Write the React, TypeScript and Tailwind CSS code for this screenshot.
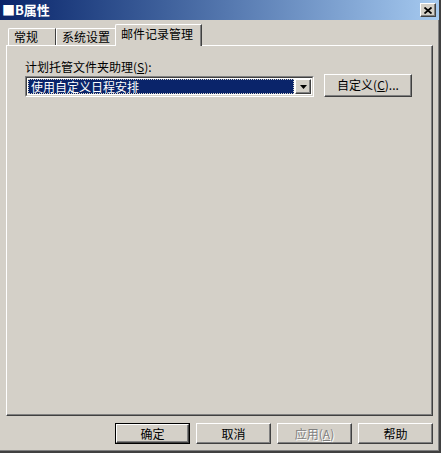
import React from "react";

const font = { fontFamily: '"Noto Sans CJK SC", "Noto Sans", sans-serif' };

function Btn({ children, def, disabled, w = "w-[75px]", h = "h-[21px]" }: { children: React.ReactNode; def?: boolean; disabled?: boolean; w?: string; h?: string }) {
  const inner = (
    <div className="flex-1 flex items-center justify-center bg-[#d4d0c8] border-t border-l border-t-white border-l-white border-r border-b border-r-[#404040] border-b-[#404040] shadow-[inset_-1px_-1px_0_#808080]">
      <span className={disabled ? "text-[#808080] [text-shadow:1px_1px_0_#ffffff]" : "text-black"}>{children}</span>
    </div>
  );
  return (
    <div className={`${w} ${h} flex text-[12px] leading-[14px] ${def ? "border border-black" : ""}`}>{inner}</div>
  );
}

export default function App() {
  return (
    <div style={font} className="w-[441px] h-[453px] bg-[#d4d0c8] flex flex-col border-r-2 border-b-2 border-r-[#404040] border-b-[#404040] shadow-[inset_-1px_-1px_0_#808080] text-[12px] text-black overflow-hidden">
      {/* Title bar */}
      <div className="h-[20px] shrink-0 flex items-center justify-between pl-[2px] pr-[3px] bg-gradient-to-r from-[#0a246a] to-[#a6caf0]">
        <span className="text-white font-bold text-[13px] leading-[16px]">■B属性</span>
        <div className="w-[16px] h-[14px] flex items-center justify-center bg-[#d4d0c8] border-t border-l border-t-white border-l-white border-r border-b border-r-[#404040] border-b-[#404040] shadow-[inset_-1px_-1px_0_#808080]">
          <svg width="8" height="7" viewBox="0 0 8 7">
            <path d="M0.5 0.5 L7.5 6.5 M7.5 0.5 L0.5 6.5" stroke="#000" strokeWidth="1.8" />
          </svg>
        </div>
      </div>

      {/* Tabs */}
      <div className="px-[6px] pt-[4px] flex flex-col">
        <div className="h-[21px] flex items-end pl-[2px]">
          <div className="w-[48px] h-[17px] flex items-start pt-[1px] pl-[5px] border-t border-l border-t-white border-l-white border-r border-r-[#404040] rounded-tl-[2px] leading-[14px]">
            常规
          </div>
          <div className="w-[59px] h-[17px] flex items-start pt-[1px] pl-[5px] border-t border-t-white border-l border-l-white leading-[14px]">
            系统设置
          </div>
          <div className="relative z-10 -mb-px w-[87px] h-[22px] flex items-start pt-[2px] pl-[5px] bg-[#d4d0c8] border-t border-l border-t-white border-l-white border-r border-r-[#404040] shadow-[inset_-1px_0_0_#808080] rounded-tl-[2px] leading-[14px]">
            邮件记录管理
          </div>
        </div>

        {/* Panel */}
        <div className="h-[371px] border-t border-l border-t-white border-l-white border-r border-b border-r-[#404040] border-b-[#404040] shadow-[inset_-1px_-1px_0_#808080] pl-[18px] pt-[13px] flex flex-col">
          <div className="leading-[16px] h-[16px]">
            计划托管文件夹助理(<span className="underline">S</span>):
          </div>
          <div className="mt-[1px] flex items-center gap-[10px]">
            {/* Combo */}
            <div className="w-[289px] h-[21px] flex border-t border-l border-t-[#808080] border-l-[#808080] border-r border-b border-r-white border-b-white">
              <div className="flex-1 flex bg-white border-t border-l border-t-[#404040] border-l-[#404040] border-r border-b border-r-[#d4d0c8] border-b-[#d4d0c8] p-[1px]">
                <div className="flex-1 flex items-center bg-[#0a246a] outline-1 outline-dotted outline-[#d4d0c8] -outline-offset-1 pl-[3px] text-white leading-[14px]">
                  使用自定义日程安排
                </div>
                <div className="w-[16px] flex items-center justify-center bg-[#d4d0c8] ml-[1px] border-t border-l border-t-white border-l-white border-r border-b border-r-[#404040] border-b-[#404040] shadow-[inset_-1px_-1px_0_#808080]">
                  <svg width="7" height="4" viewBox="0 0 7 4">
                    <path d="M0 0 H7 L3.5 4 Z" fill="#000" />
                  </svg>
                </div>
              </div>
            </div>
            <div className="-mt-[3px]">
              <Btn w="w-[88px]" h="h-[23px]">
                自定义(<span className="underline">C</span>)...
              </Btn>
            </div>
          </div>
        </div>

        {/* Buttons */}
        <div className="mt-[7px] flex justify-end gap-[6px]">
          <Btn def>确定</Btn>
          <Btn>取消</Btn>
          <Btn disabled>
            应用(<span className="underline">A</span>)
          </Btn>
          <Btn>帮助</Btn>
        </div>
      </div>
    </div>
  );
}
